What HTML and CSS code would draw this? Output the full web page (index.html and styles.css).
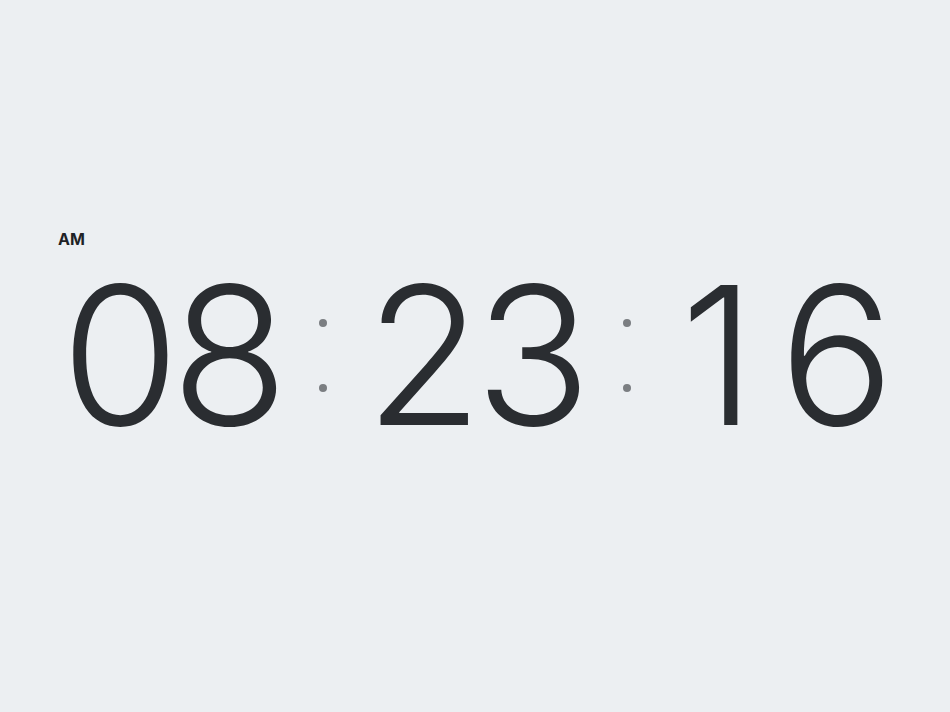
FILE: index.html
```html
<!DOCTYPE html>
<html lang="en">
<head>
<meta charset="utf-8">
<title>Clock</title>
<link rel="stylesheet" href="styles.css">
</head>
<body>
<main class="stage">
  <div class="clock">
    <div class="period">AM</div>
    <div class="time">
      <span class="unit"><span class="digit">0</span><span class="digit">8</span></span>
      <span class="sep"><i class="dot"></i><i class="dot"></i></span>
      <span class="unit"><span class="digit">2</span><span class="digit">3</span></span>
      <span class="sep"><i class="dot"></i><i class="dot"></i></span>
      <span class="unit"><span class="digit digit-one">1</span><span class="digit">6</span></span>
    </div>
  </div>
</main>
</body>
</html>
```

FILE: styles.css
```css
html, body {
  margin: 0;
  padding: 0;
  height: 100%;
}
body {
  background: #eceff2;
  color: #2a2d31;
  font-family: Inter, "Noto Sans", sans-serif;
}
.stage {
  height: 100%;
  display: flex;
  align-items: center;
  padding-left: 58px;
  padding-bottom: 30px;
  box-sizing: border-box;
}
.clock {
  display: flex;
  flex-direction: column;
}
.period {
  font-size: 16px;
  font-weight: 700;
  letter-spacing: 0.01em;
  color: #1f2226;
  line-height: 17px;
}
.time {
  display: flex;
  align-items: center;
  gap: 38px;
  margin-top: 11px;
  margin-left: 3px;
}
.unit {
  display: flex;
  font-size: 192px;
  font-weight: 300;
  line-height: 1;
}
.digit {
  display: block;
  width: 110px;
  text-align: center;
}
.digit-one {
  text-indent: -12px;
}
.sep {
  display: flex;
  flex-direction: column;
  gap: 57px;
  margin-top: 1px;
}
.dot {
  display: block;
  width: 8px;
  height: 8px;
  border-radius: 50%;
  background: #7b7e82;
}
```
